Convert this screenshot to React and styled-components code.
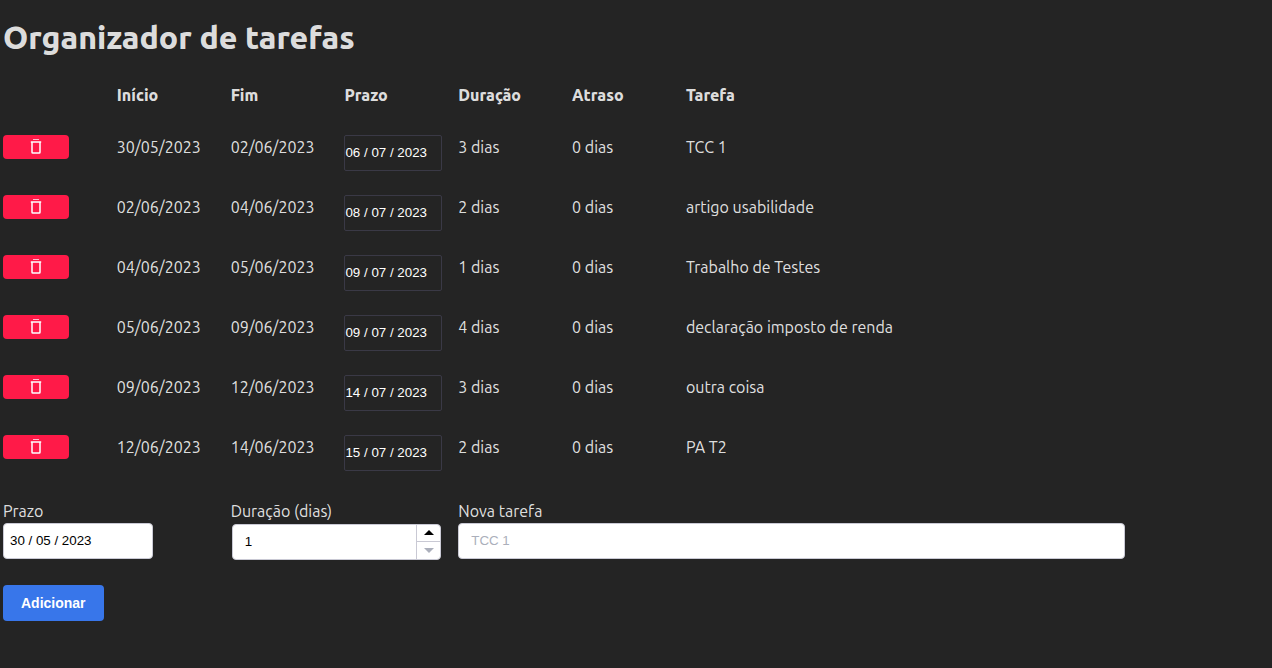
import React, { useState } from "react";
import styled, { createGlobalStyle } from "styled-components";

const GlobalStyle = createGlobalStyle`
  * { box-sizing: border-box; }
  body {
    margin: 0;
    background: #242424;
    color: rgba(255, 255, 255, 0.87);
    font-family: Ubuntu, "Noto Sans", sans-serif;
    font-size: 16px;
    font-weight: 450;
    line-height: 24px;
  }
`;

const Page = styled.main`
  padding: 16px 33px 47px 3px;
`;

const Title = styled.h1`
  margin: 0 0 25px;
  font-size: 32px;
  line-height: 42px;
  font-weight: 800;
`;

const Table = styled.table`
  display: block;
  border-spacing: 0;
`;

const Head = styled.thead`
  display: block;
  margin-bottom: 28px;
`;

const Body = styled.tbody`
  display: grid;
  row-gap: 24px;
`;

const Row = styled.tr`
  display: grid;
  grid-template-columns: repeat(11, minmax(0, 1fr));
  column-gap: 16px;
  align-items: start;
`;

const HeadCell = styled.th`
  padding: 0;
  text-align: left;
  font-weight: 800;
  grid-column: span ${(p) => p.$span || 1};
`;

const Cell = styled.td`
  display: flex;
  padding: 0;
  white-space: nowrap;
  grid-column: span ${(p) => p.$span || 1};
`;

const DeleteButton = styled.button`
  display: flex;
  align-items: center;
  justify-content: center;
  width: 66px;
  height: 24px;
  padding: 0;
  border: 0;
  border-radius: 4px;
  background: #ff1a48;
  color: #fff;
  cursor: pointer;
`;

const TextInput = styled.input`
  display: block;
  width: ${(p) => p.$width || "100%"};
  height: 36px;
  padding: 0 ${(p) => p.$pad || 12}px 2px;
  border: 1px solid #c9c9d4;
  border-radius: 4px;
  background: #fff;
  color: #000;
  font-family: "Liberation Sans", sans-serif;
  &::placeholder { color: #abafbb; opacity: 1; }
`;

const RowDate = styled(TextInput)`
  padding: 0 0 2px;
  border-color: #3a3946;
  border-radius: 2px;
  background: transparent;
  color: #fff;
`;

const Form = styled.form`
  display: grid;
  grid-template-columns: repeat(11, minmax(0, 1fr));
  column-gap: 16px;
  row-gap: 25px;
  align-items: start;
  margin-top: 28px;
`;

const Field = styled.div`
  grid-column: span ${(p) => p.$span};
`;

const Label = styled.label`
  display: block;
`;

const NumberBox = styled.div`
  display: flex;
  height: 36px;
  margin: 1px 1px 0;
  border: 1px solid #c9c9d4;
  border-radius: 4px;
  background: #fff;
  overflow: hidden;
`;

const NumberInput = styled.input`
  flex: 1;
  min-width: 0;
  padding: 0 12px 2px;
  border: 0;
  background: transparent;
  color: #000;
  font-family: "Liberation Sans", sans-serif;
  appearance: textfield;
  &::-webkit-inner-spin-button { appearance: none; }
`;

const Steppers = styled.div`
  display: grid;
  grid-template-rows: 16px 18px;
  width: 24px;
  border-left: 1px solid #c9c9d4;
`;

const Step = styled.button`
  display: flex;
  align-items: center;
  justify-content: center;
  padding: 0;
  border: 0;
  background: transparent;
  color: #000;
  & + & { border-top: 1px solid #c9c9d4; }
  &:disabled { color: #abafbb; }
`;

const AddButton = styled.button`
  grid-column: 1 / -1;
  justify-self: start;
  height: 36px;
  padding: 0 18px;
  border: 0;
  border-radius: 4px;
  background: #3876ea;
  color: #fff;
  font-family: "Liberation Sans", sans-serif;
  font-size: 14px;
  font-weight: 700;
  cursor: pointer;
`;

const TrashIcon = () => (
  <svg width="12" height="16" viewBox="0 0 12 16" fill="none" stroke="currentColor" aria-hidden="true">
    <path d="M3 .5h6" strokeOpacity="0.7" />
    <path d="M.8 3h10.4" strokeWidth="1.5" />
    <path d="M2 3v10.2q0 .8.8.8h6.4q.8 0 .8-.8V3" strokeWidth="1.5" />
  </svg>
);

const Triangle = ({ down }) => (
  <svg width="10" height="6" viewBox="0 0 10 6" fill="currentColor" aria-hidden="true">
    <path d={down ? "M0 0h10L5 5z" : "M0 5h10L5 0z"} />
  </svg>
);

const initialTasks = [
  { start: "30/05/2023", end: "02/06/2023", due: "06 / 07 / 2023", days: 3, name: "TCC 1" },
  { start: "02/06/2023", end: "04/06/2023", due: "08 / 07 / 2023", days: 2, name: "artigo usabilidade" },
  { start: "04/06/2023", end: "05/06/2023", due: "09 / 07 / 2023", days: 1, name: "Trabalho de Testes" },
  { start: "05/06/2023", end: "09/06/2023", due: "09 / 07 / 2023", days: 4, name: "declaração imposto de renda" },
  { start: "09/06/2023", end: "12/06/2023", due: "14 / 07 / 2023", days: 3, name: "outra coisa" },
  { start: "12/06/2023", end: "14/06/2023", due: "15 / 07 / 2023", days: 2, name: "PA T2" },
];

export default function App() {
  const [tasks, setTasks] = useState(initialTasks);
  const [days, setDays] = useState(1);

  return (
    <>
      <GlobalStyle />
      <Page>
        <Title>Organizador de tarefas</Title>
        <Table>
          <Head>
            <Row>
              <Cell />
              <HeadCell>Início</HeadCell>
              <HeadCell>Fim</HeadCell>
              <HeadCell>Prazo</HeadCell>
              <HeadCell>Duração</HeadCell>
              <HeadCell>Atraso</HeadCell>
              <HeadCell $span={5}>Tarefa</HeadCell>
            </Row>
          </Head>
          <Body>
            {tasks.map((task) => (
              <Row key={task.name}>
                <Cell>
                  <DeleteButton
                    type="button"
                    aria-label={`Excluir ${task.name}`}
                    onClick={() => setTasks(tasks.filter((t) => t !== task))}
                  >
                    <TrashIcon />
                  </DeleteButton>
                </Cell>
                <Cell>{task.start}</Cell>
                <Cell>{task.end}</Cell>
                <Cell>
                  <RowDate type="text" aria-label={`Prazo de ${task.name}`} defaultValue={task.due} />
                </Cell>
                <Cell>{task.days} dias</Cell>
                <Cell>0 dias</Cell>
                <Cell $span={5}>{task.name}</Cell>
              </Row>
            ))}
          </Body>
        </Table>
        <Form onSubmit={(e) => e.preventDefault()}>
          <Field $span={2}>
            <Label htmlFor="due">Prazo</Label>
            <TextInput id="due" type="text" defaultValue="30 / 05 / 2023" $width="150px" $pad={6} />
          </Field>
          <Field $span={2}>
            <Label htmlFor="days">Duração (dias)</Label>
            <NumberBox>
              <NumberInput
                id="days"
                type="number"
                min="1"
                value={days}
                onChange={(e) => setDays(Number(e.target.value))}
              />
              <Steppers>
                <Step type="button" aria-label="Aumentar" onClick={() => setDays(days + 1)}>
                  <Triangle />
                </Step>
                <Step type="button" aria-label="Diminuir" disabled={days <= 1} onClick={() => setDays(days - 1)}>
                  <Triangle down />
                </Step>
              </Steppers>
            </NumberBox>
          </Field>
          <Field $span={6}>
            <Label htmlFor="name">Nova tarefa</Label>
            <TextInput id="name" type="text" placeholder="TCC 1" />
          </Field>
          <AddButton type="submit">Adicionar</AddButton>
        </Form>
      </Page>
    </>
  );
}
